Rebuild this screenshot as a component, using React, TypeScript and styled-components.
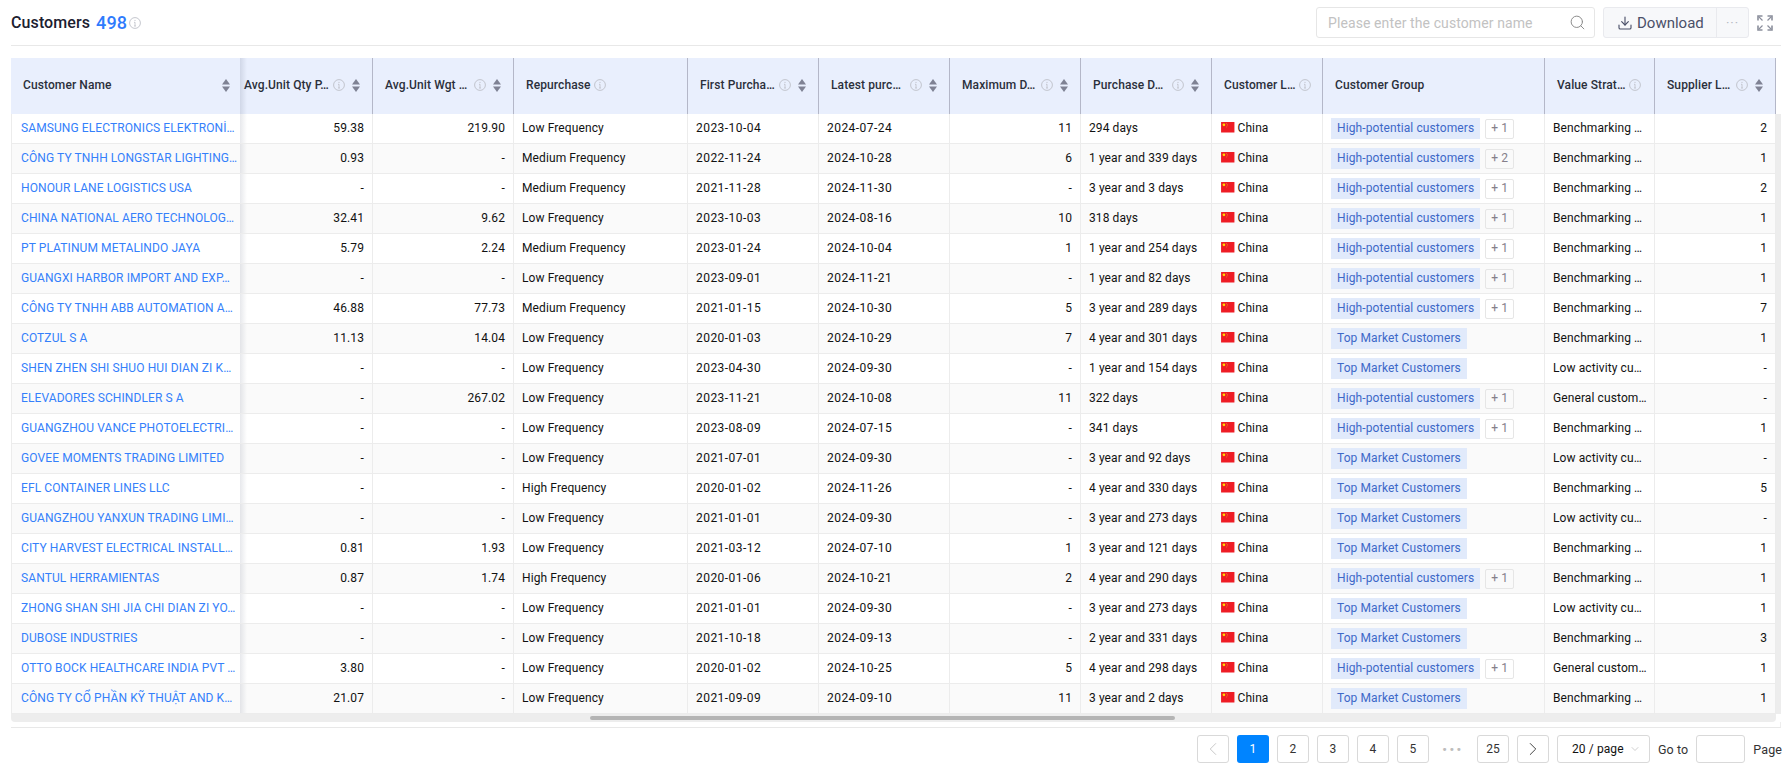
import React from 'react';
import styled, { createGlobalStyle } from 'styled-components';
import { ChevronDown, ChevronLeft, ChevronRight, Download, Search } from 'lucide-react';

const GlobalStyle = createGlobalStyle`
  html, body {
    margin: 0;
    background: #fff;
  }
  body {
    font-family: Roboto, "Liberation Sans", sans-serif;
    font-size: 12px;
    letter-spacing: 0.1px;
    color: #111;
  }
`;

const Page = styled.div`
  width: 1792px;
  height: 774px;
  box-sizing: border-box;
  padding: 0 11px;
  overflow: hidden;
`;

const TopBar = styled.div`
  height: 45px;
  box-sizing: content-box;
  display: flex;
  align-items: center;
  justify-content: space-between;
  padding-right: 8px;
  border-bottom: 1px solid #e8e8e8;
`;

const Title = styled.div`
  display: flex;
  align-items: center;
  font-size: 16px;
  font-weight: 500;
  color: #1c2030;
`;

const Count = styled.span`
  margin-left: 6px;
  margin-right: -1px;
  font-size: 18px;
  color: #2f7bfd;
`;

const Tools = styled.div`
  display: flex;
  align-items: center;
`;

const SearchBox = styled.div`
  width: 279px;
  height: 31px;
  box-sizing: border-box;
  display: flex;
  align-items: center;
  justify-content: space-between;
  padding: 0 8px 0 11px;
  border: 1px solid #e6e6e6;
  border-radius: 3px;
  font-size: 14px;
  color: #c2c2c2;
  svg {
    color: #8c8c8c;
  }
`;

const ButtonGroup = styled.div`
  display: flex;
  height: 31px;
  margin-left: 8px;
  box-sizing: border-box;
  background: #f7f8fa;
  border: 1px solid #e9eaee;
  border-radius: 3px;
  color: #4a5068;
`;

const DownloadButton = styled.div`
  width: 112px;
  display: flex;
  align-items: center;
  gap: 4px;
  padding-left: 13px;
  box-sizing: border-box;
  font-size: 15px;
  letter-spacing: 0;
`;

const MoreButton = styled.div`
  width: 31px;
  display: flex;
  align-items: center;
  justify-content: center;
  border-left: 1px solid #e9eaee;
  color: #b5b8c2;
  font-size: 13px;
  letter-spacing: 1px;
`;

const FullscreenIcon = styled.svg`
  width: 16px;
  height: 16px;
  margin-left: 8px;
  color: #8b8f9c;
`;

const TableFrame = styled.div`
  display: flex;
  margin-top: 12px;
`;

const TableColumn = styled.div`
  width: 1765px;
`;

const VerticalTrack = styled.div`
  width: 5px;
  margin-top: 56px;
  margin-bottom: 8px;
  background: #ededed;
`;

const Table = styled.table`
  width: 1765px;
  table-layout: fixed;
  border-collapse: separate;
  border-spacing: 0;
`;

const HeadCell = styled.th<{ $frozen?: boolean; $clipped?: boolean }>`
  position: relative;
  height: 56px;
  box-sizing: border-box;
  padding: ${(p) => (p.$clipped ? '0 12px 0 4px' : p.$frozen ? '0 10px 0 12px' : '0 12px')};
  background: #e9effd;
  border-right: ${(p) => (p.$frozen ? 'none' : '1.5px solid #b4b7c8')};
  text-align: left;
  font-size: 12px;
  font-weight: 500;
  color: #2b2f3b;
  ${(p) =>
    p.$frozen &&
    `
    &::after {
      content: '';
      position: absolute;
      top: 0;
      bottom: 0;
      left: 100%;
      width: 7px;
      background: linear-gradient(to right, rgba(60, 70, 100, 0.14), rgba(60, 70, 100, 0));
      z-index: 2;
    }
  `}
`;

const HeadInner = styled.div`
  display: flex;
  align-items: center;
  padding-bottom: 2px;
`;

const HeadLabel = styled.span<{ $grow?: boolean }>`
  flex: ${(p) => (p.$grow ? '1 1 auto' : '0 0 auto')};
  min-width: 0;
  white-space: nowrap;
`;

const InfoIcon = styled.svg`
  flex: none;
  width: 12px;
  height: 12px;
  margin-left: 3px;
  color: #bdbfc7;
`;

const SortIcon = styled.svg`
  flex: none;
  width: 8px;
  height: 13px;
  margin-left: 7px;
  color: #7f8294;
`;

const Row = styled.tr<{ $even: boolean }>`
  background: ${(p) => (p.$even ? '#fafafa' : '#fff')};
`;

const Cell = styled.td<{ $right?: boolean; $frozen?: boolean; $date?: boolean }>`
  position: relative;
  height: 30px;
  box-sizing: border-box;
  padding: 0 8px 2px;
  border-right: 1px solid #ececec;
  border-bottom: 1px solid #ececec;
  text-align: ${(p) => (p.$right ? 'right' : 'left')};
  white-space: nowrap;
  overflow: ${(p) => (p.$frozen ? 'visible' : 'hidden')};
  letter-spacing: ${(p) => (p.$date ? '0.45px' : 'inherit')};
  ${(p) =>
    p.$frozen &&
    `
    padding-left: 9px;
    border-left: 1px solid #ececec;
    border-right: none;
    &::after {
      content: '';
      position: absolute;
      top: 0;
      bottom: 0;
      left: 100%;
      width: 7px;
      background: linear-gradient(to right, rgba(60, 70, 100, 0.12), rgba(60, 70, 100, 0));
      z-index: 2;
    }
  `}
`;

const CustomerLink = styled.span`
  color: #3480fb;
`;

const Location = styled.div`
  display: flex;
  align-items: center;
  gap: 3px;
  margin-left: 1px;
`;

const Flag = styled.svg`
  width: 13.5px;
  height: 10.5px;
`;

const TagRow = styled.div`
  display: flex;
  align-items: center;
  gap: 5px;
  padding-top: 2px;
`;

const GroupTag = styled.span`
  height: 21px;
  line-height: 20px;
  padding: 0 6px;
  background: #e1eafb;
  color: #3d68c8;
`;

const PlusTag = styled.span`
  width: 29px;
  height: 20px;
  box-sizing: border-box;
  line-height: 17px;
  text-align: center;
  border: 1px solid #e6e6e6;
  border-radius: 2px;
  color: #85808a;
`;

const HorizontalTrack = styled.div`
  height: 8px;
  background: #ededed;
  border-radius: 0 0 4px 4px;
  display: flex;
  align-items: center;
`;

const HorizontalThumb = styled.div`
  width: 585px;
  height: 4px;
  margin-left: 579px;
  border-radius: 2px;
  background: #b4b4b4;
`;

const FooterLine = styled.div`
  height: 5px;
  border-right: 1px solid #eee;
  border-bottom: 1px solid #e8e8e8;
`;

const Pagination = styled.div`
  display: flex;
  justify-content: flex-end;
  align-items: center;
  gap: 8px;
  margin-top: 7px;
  margin-right: -1px;
`;

const PageButton = styled.div<{ $active?: boolean; $muted?: boolean }>`
  width: 32px;
  height: 28px;
  box-sizing: border-box;
  display: flex;
  align-items: center;
  justify-content: center;
  border: ${(p) => (p.$active ? 'none' : '1px solid #d9d9d9')};
  border-radius: 3px;
  background: ${(p) => (p.$active ? '#0084ff' : '#fff')};
  color: ${(p) => (p.$active ? '#fff' : p.$muted ? '#c4c4c4' : '#333')};
  font-size: 12px;
`;

const PageDots = styled.div`
  width: 32px;
  text-align: center;
  color: #bdbdbd;
  font-size: 13px;
  letter-spacing: 2.5px;
  font-weight: 700;
`;

const PageSize = styled.div`
  width: 93px;
  height: 28px;
  box-sizing: border-box;
  display: flex;
  align-items: center;
  justify-content: space-between;
  padding: 0 8px 0 14px;
  border: 1px solid #d9d9d9;
  border-radius: 3px;
  svg {
    color: #bfbfbf;
  }
`;

const GoLabel = styled.span`
  font-size: 12.5px;
  color: #333;
`;

const GoInput = styled.div`
  width: 49px;
  height: 28px;
  box-sizing: border-box;
  border: 1px solid #d9d9d9;
  border-radius: 3px;
`;

type Column = {
  label: string;
  width: number;
  info?: boolean;
  sort?: boolean;
  grow?: boolean;
};

const columns: Column[] = [
  { label: 'Customer Name', width: 229, sort: true, grow: true },
  { label: 'Avg.Unit Qty P…', width: 133, info: true, sort: true, grow: true },
  { label: 'Avg.Unit Wgt …', width: 141, info: true, sort: true, grow: true },
  { label: 'Repurchase', width: 174, info: true },
  { label: 'First Purcha…', width: 131, info: true, sort: true, grow: true },
  { label: 'Latest purc…', width: 131, info: true, sort: true, grow: true },
  { label: 'Maximum D…', width: 131, info: true, sort: true, grow: true },
  { label: 'Purchase D…', width: 131, info: true, sort: true, grow: true },
  { label: 'Customer L…', width: 111, info: true },
  { label: 'Customer Group', width: 222 },
  { label: 'Value Strat…', width: 110, info: true },
  { label: 'Supplier L…', width: 121, info: true, sort: true, grow: true },
];

type Customer = [
  string, string, string, string, string, string, string, string, string, string, string,
];

const BM = 'Benchmarking …';
const LA = 'Low activity cu…';
const GC = 'General custom…';
const HP = 'High-potential customers';
const TM = 'Top Market Customers';

// name, qty, wgt, repurchase, first, latest, max, duration, group (+n), value, supplier level
const customers: Customer[] = [
  ['SAMSUNG ELECTRONICS ELEKTRONİ…', '59.38', '219.90', 'Low', '2023-10-04', '2024-07-24', '11', '294 days', '1', BM, '2'],
  ['CÔNG TY TNHH LONGSTAR LIGHTING…', '0.93', '-', 'Medium', '2022-11-24', '2024-10-28', '6', '1 year and 339 days', '2', BM, '1'],
  ['HONOUR LANE LOGISTICS USA', '-', '-', 'Medium', '2021-11-28', '2024-11-30', '-', '3 year and 3 days', '1', BM, '2'],
  ['CHINA NATIONAL AERO TECHNOLOG…', '32.41', '9.62', 'Low', '2023-10-03', '2024-08-16', '10', '318 days', '1', BM, '1'],
  ['PT PLATINUM METALINDO JAYA', '5.79', '2.24', 'Medium', '2023-01-24', '2024-10-04', '1', '1 year and 254 days', '1', BM, '1'],
  ['GUANGXI HARBOR IMPORT AND EXP…', '-', '-', 'Low', '2023-09-01', '2024-11-21', '-', '1 year and 82 days', '1', BM, '1'],
  ['CÔNG TY TNHH ABB AUTOMATION A…', '46.88', '77.73', 'Medium', '2021-01-15', '2024-10-30', '5', '3 year and 289 days', '1', BM, '7'],
  ['COTZUL S A', '11.13', '14.04', 'Low', '2020-01-03', '2024-10-29', '7', '4 year and 301 days', '', BM, '1'],
  ['SHEN ZHEN SHI SHUO HUI DIAN ZI K…', '-', '-', 'Low', '2023-04-30', '2024-09-30', '-', '1 year and 154 days', '', LA, '-'],
  ['ELEVADORES SCHINDLER S A', '-', '267.02', 'Low', '2023-11-21', '2024-10-08', '11', '322 days', '1', GC, '-'],
  ['GUANGZHOU VANCE PHOTOELECTRI…', '-', '-', 'Low', '2023-08-09', '2024-07-15', '-', '341 days', '1', BM, '1'],
  ['GOVEE MOMENTS TRADING LIMITED', '-', '-', 'Low', '2021-07-01', '2024-09-30', '-', '3 year and 92 days', '', LA, '-'],
  ['EFL CONTAINER LINES LLC', '-', '-', 'High', '2020-01-02', '2024-11-26', '-', '4 year and 330 days', '', BM, '5'],
  ['GUANGZHOU YANXUN TRADING LIMI…', '-', '-', 'Low', '2021-01-01', '2024-09-30', '-', '3 year and 273 days', '', LA, '-'],
  ['CITY HARVEST ELECTRICAL INSTALL…', '0.81', '1.93', 'Low', '2021-03-12', '2024-07-10', '1', '3 year and 121 days', '', BM, '1'],
  ['SANTUL HERRAMIENTAS', '0.87', '1.74', 'High', '2020-01-06', '2024-10-21', '2', '4 year and 290 days', '1', BM, '1'],
  ['ZHONG SHAN SHI JIA CHI DIAN ZI YO…', '-', '-', 'Low', '2021-01-01', '2024-09-30', '-', '3 year and 273 days', '', LA, '1'],
  ['DUBOSE INDUSTRIES', '-', '-', 'Low', '2021-10-18', '2024-09-13', '-', '2 year and 331 days', '', BM, '3'],
  ['OTTO BOCK HEALTHCARE INDIA PVT …', '3.80', '-', 'Low', '2020-01-02', '2024-10-25', '5', '4 year and 298 days', '1', GC, '1'],
  ['CÔNG TY CỔ PHẦN KỸ THUẬT AND K…', '21.07', '-', 'Low', '2021-09-09', '2024-09-10', '11', '3 year and 2 days', '', BM, '1'],
];

const Info = () => (
  <InfoIcon viewBox="0 0 12 12" fill="none" stroke="currentColor">
    <circle cx="6" cy="6" r="5.4" strokeWidth="0.9" />
    <path d="M6 5.2V9M5 5.3h1M5 9h2" strokeWidth="0.8" />
    <circle cx="6" cy="3.3" r="0.6" fill="currentColor" stroke="none" />
  </InfoIcon>
);

const Sort = () => (
  <SortIcon viewBox="0 0 8 13" fill="currentColor">
    <path d="M4 0 8 5.5H0z" />
    <path d="M4 13 0 7.5h8z" />
  </SortIcon>
);

const ChinaFlag = () => (
  <Flag viewBox="0 0 14 11">
    <rect width="14" height="11" fill="#ee1c25" />
    <circle cx="3" cy="3" r="1.4" fill="#ffde00" />
    <circle cx="5.6" cy="1.4" r="0.4" fill="#ffde00" />
    <circle cx="6.4" cy="2.6" r="0.4" fill="#ffde00" />
    <circle cx="6.4" cy="4" r="0.4" fill="#ffde00" />
    <circle cx="5.6" cy="5.2" r="0.4" fill="#ffde00" />
  </Flag>
);

const App = () => (
  <Page>
    <GlobalStyle />
    <TopBar>
      <Title>
        Customers<Count>498</Count>
        <Info />
      </Title>
      <Tools>
        <SearchBox>
          Please enter the customer name
          <Search size={17} strokeWidth={1.4} />
        </SearchBox>
        <ButtonGroup>
          <DownloadButton>
            <Download size={16} strokeWidth={1.7} />
            Download
          </DownloadButton>
          <MoreButton>···</MoreButton>
        </ButtonGroup>
        <FullscreenIcon viewBox="0 0 16 16" fill="none" stroke="currentColor" strokeWidth="1.6">
          <path d="M1 5.5V1h4.5M10.5 1H15v4.5M15 10.5V15h-4.5M5.5 15H1v-4.5" />
          <path d="M2 2 5.5 5.5M14 2l-3.5 3.5M14 14l-3.5-3.5M2 14l3.5-3.5" strokeWidth="1.2" />
        </FullscreenIcon>
      </Tools>
    </TopBar>

    <TableFrame>
      <TableColumn>
        <Table>
          <colgroup>
            {columns.map((c) => (
              <col key={c.label} style={{ width: c.width }} />
            ))}
          </colgroup>
          <thead>
            <tr>
              {columns.map((c, i) => (
                <HeadCell key={c.label} $frozen={i === 0} $clipped={i === 1}>
                  <HeadInner>
                    <HeadLabel $grow={c.grow}>{c.label}</HeadLabel>
                    {c.info && <Info />}
                    {c.sort && <Sort />}
                  </HeadInner>
                </HeadCell>
              ))}
            </tr>
          </thead>
          <tbody>
            {customers.map((r, i) => (
              <Row key={r[0]} $even={i % 2 === 1}>
                <Cell $frozen>
                  <CustomerLink>{r[0]}</CustomerLink>
                </Cell>
                <Cell $right>{r[1]}</Cell>
                <Cell $right>{r[2]}</Cell>
                <Cell>{r[3]} Frequency</Cell>
                <Cell $date>{r[4]}</Cell>
                <Cell $date>{r[5]}</Cell>
                <Cell $right>{r[6]}</Cell>
                <Cell>{r[7]}</Cell>
                <Cell>
                  <Location>
                    <ChinaFlag />
                    China
                  </Location>
                </Cell>
                <Cell>
                  <TagRow>
                    <GroupTag>{r[8] ? HP : TM}</GroupTag>
                    {r[8] && <PlusTag>+ {r[8]}</PlusTag>}
                  </TagRow>
                </Cell>
                <Cell>{r[9]}</Cell>
                <Cell $right>{r[10]}</Cell>
              </Row>
            ))}
          </tbody>
        </Table>
        <HorizontalTrack>
          <HorizontalThumb />
        </HorizontalTrack>
      </TableColumn>
      <VerticalTrack />
    </TableFrame>
    <FooterLine />

    <Pagination>
      <PageButton $muted>
        <ChevronLeft size={22} strokeWidth={1} />
      </PageButton>
      <PageButton $active>1</PageButton>
      <PageButton>2</PageButton>
      <PageButton>3</PageButton>
      <PageButton>4</PageButton>
      <PageButton>5</PageButton>
      <PageDots>•••</PageDots>
      <PageButton>25</PageButton>
      <PageButton>
        <ChevronRight size={22} strokeWidth={1} />
      </PageButton>
      <PageSize>
        20 / page
        <ChevronDown size={12} strokeWidth={1.5} />
      </PageSize>
      <GoLabel>Go to</GoLabel>
      <GoInput />
      <GoLabel>Page</GoLabel>
    </Pagination>
  </Page>
);

export default App;
